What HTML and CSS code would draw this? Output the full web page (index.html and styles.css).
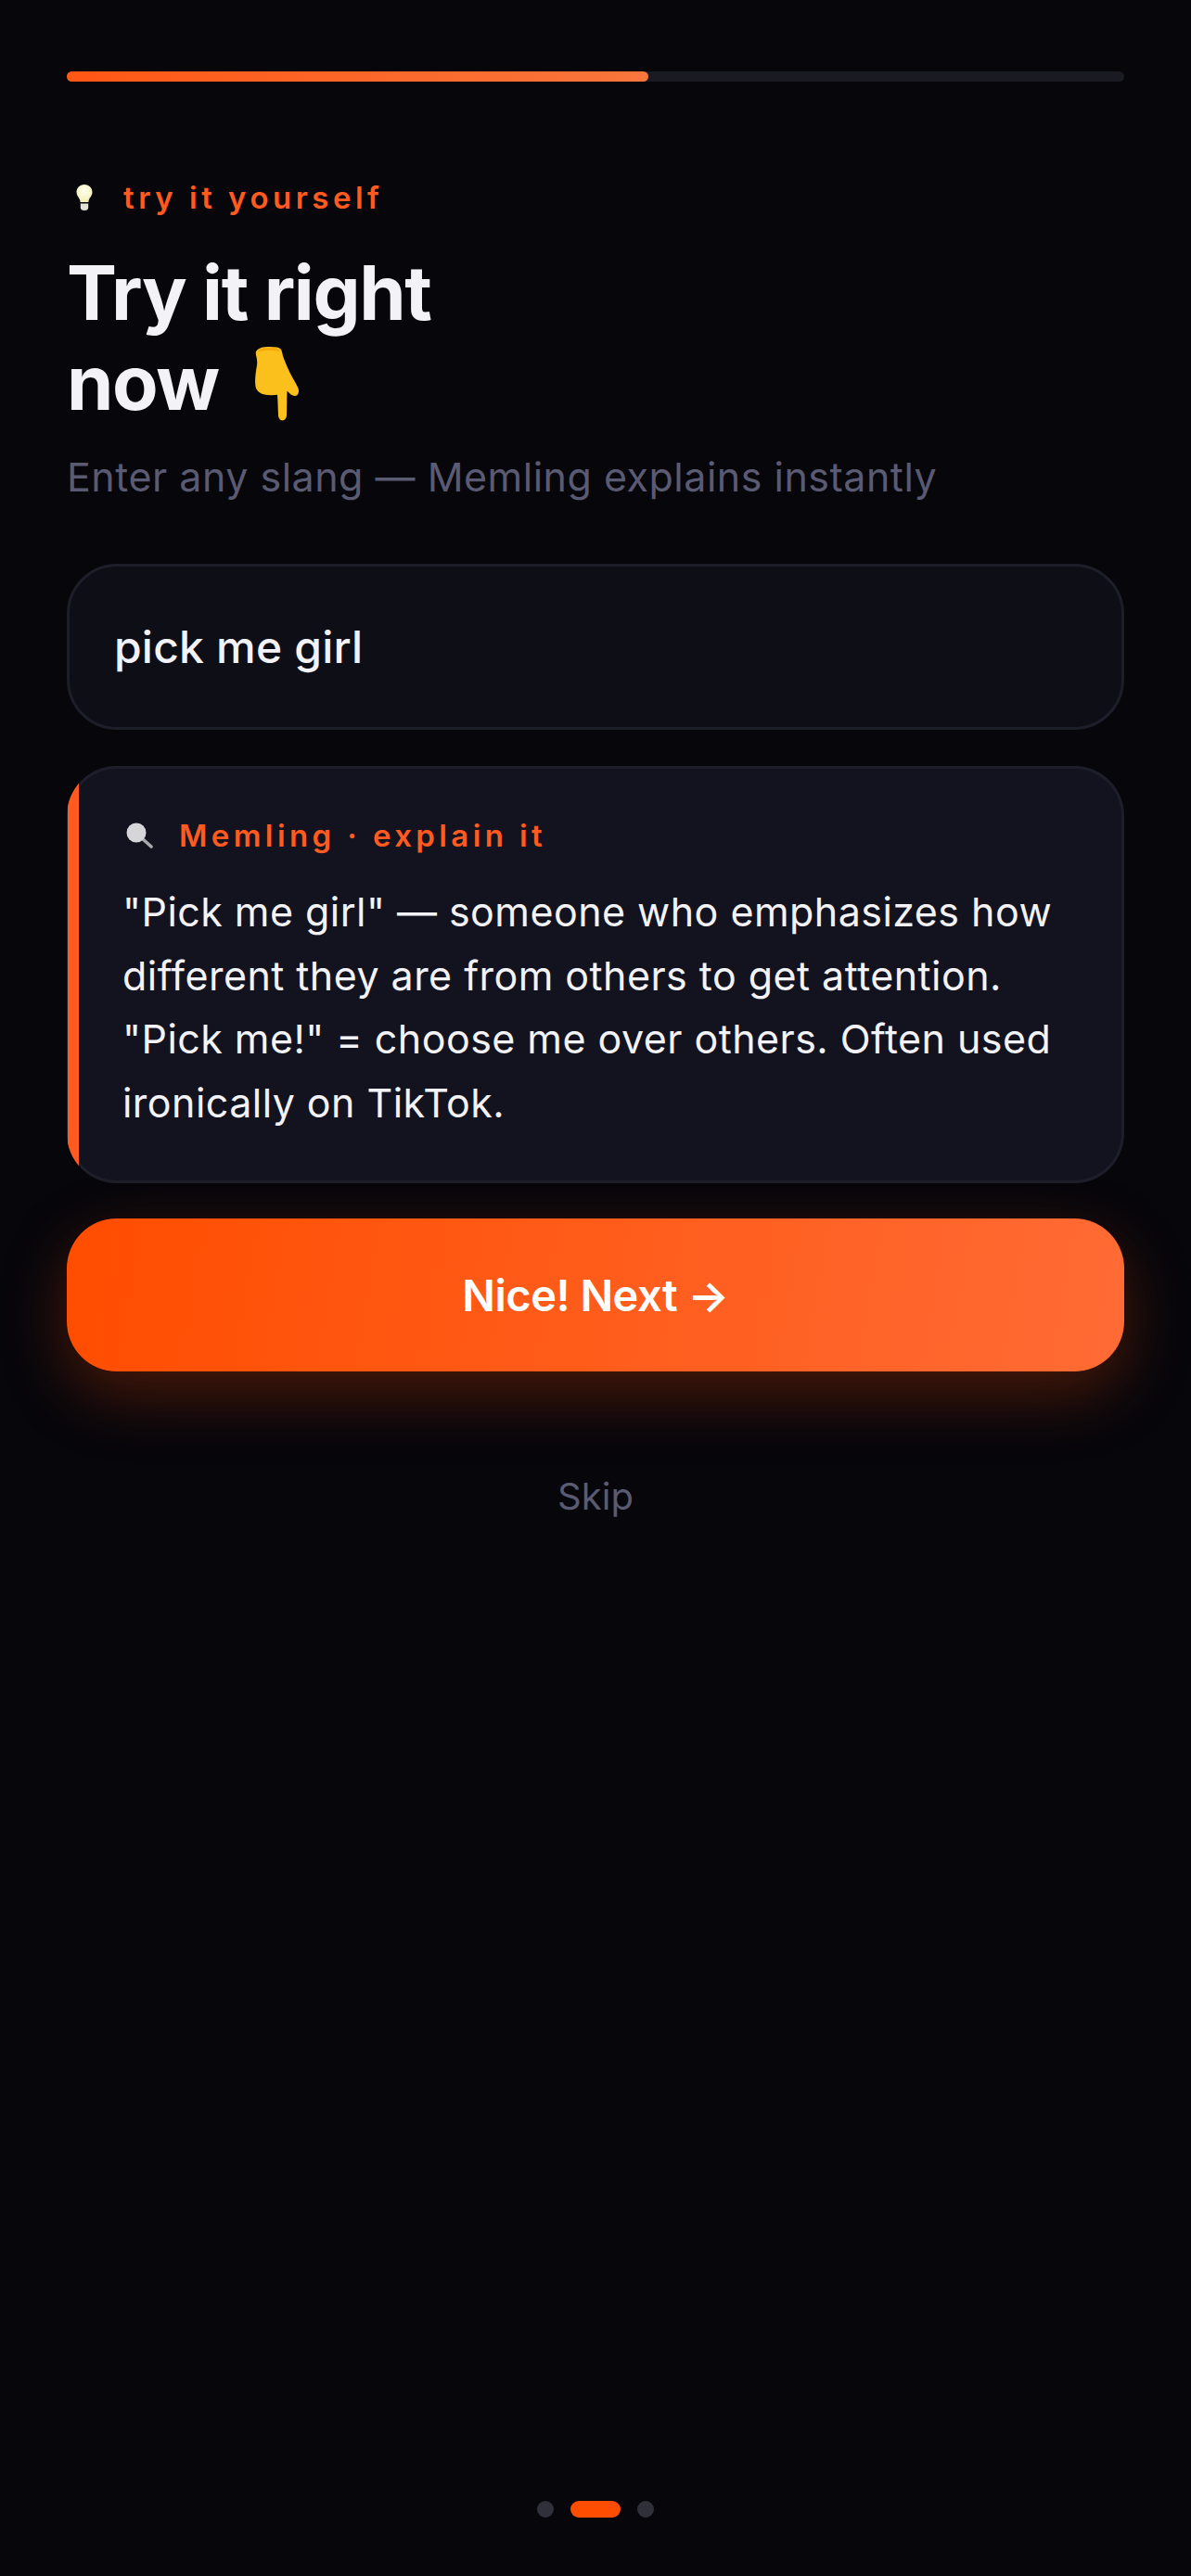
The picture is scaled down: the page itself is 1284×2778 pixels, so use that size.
FILE: index.html
```html
<!DOCTYPE html>
<html lang="en">
<head>
<meta charset="utf-8">
<title>Memling</title>
<link rel="stylesheet" href="styles.css">
</head>
<body>
<main class="screen">
  <div class="progress"><div class="progress-fill"></div></div>
  <div class="eyebrow">
    <svg class="icon-bulb" viewBox="0 0 20 30"><defs><radialGradient id="bulbGlow" cx="50%" cy="35%" r="60%"><stop offset="0" stop-color="#fffff0"/><stop offset="1" stop-color="#f4f0b8"/></radialGradient></defs><path d="M10 1C4.800 1 1.500 4.800 1.500 9.200c0 3.600 2.600 5.600 3.600 8.300.4 1 .5 2 .5 2.500h8.800c0-.5.1-1.500.5-2.500 1-2.700 3.600-4.700 3.600-8.300C18.500 4.800 15.200 1 10 1z" fill="url(#bulbGlow)"/><path d="M5.800 21.500h8.400v4.500c0 1.800-1.600 3-4.200 3s-4.200-1.200-4.200-3z" fill="#e4e2d6"/></svg>
    <span class="eyebrow-text">try it yourself</span>
  </div>
  <h1 class="title">Try it right<br>now <svg class="icon-hand" viewBox="0 0 52 81"><path d="M3 6C5 3 8 1.500 12 1.200 17 .8 22 .8 26 1.500c3 .6 4.500 2.500 5 5 .8 5 3.500 11 6.500 18 2.500 6 7 13 10.500 20 1.500 3 1.500 6.500-.5 8.500-2.500 2-6 .5-8.500-2-.8-.8-1.500-1.500-2.500-2.200-.3 8-.2 17-.5 26-.2 3.200-2 5.700-4.500 5.700s-4.300-2.500-4.500-5.700c-.3-7.500-.5-15-1-22-4 .6-8.500.7-12.500 0C7.500 52 3.500 48.500 2.600 44 1.500 38 2.500 29 4 21c.6-3.500 0-6.500-.5-9C3 10 2.400 8 3 6z" fill="#fbc01c"/><path d="M5 6c2-2.500 4.500-3.500 8-3.700 5-.3 10-.3 13 .5 1.500.5 2.500 1.500 3 3.200-7-1.500-17-1.500-24 0z" fill="#f6ab0a"/></svg></h1>
  <p class="subtitle">Enter any slang — Memling explains instantly</p>
  <div class="input-box">pick me girl</div>
  <section class="answer">
    <div class="answer-label">
      <svg class="icon-search" viewBox="0 0 30 30"><line x1="18" y1="18" x2="28" y2="27" stroke="#a8a8ac" stroke-width="3.600" stroke-linecap="round"/><circle cx="12" cy="12" r="10.500" fill="#d6d6da"/></svg>
      <span class="answer-label-text">Memling · explain it</span>
    </div>
    <p class="answer-text">"Pick me girl" — someone who emphasizes how different they are from others to get attention. "Pick me!" = choose me over others. Often used ironically on TikTok.</p>
  </section>
  <button class="next-button" type="button">Nice! Next →</button>
  <div class="skip">Skip</div>
  <nav class="dots">
    <span class="dot"></span>
    <span class="dot dot-active"></span>
    <span class="dot"></span>
  </nav>
</main>
</body>
</html>
```

FILE: styles.css
```css
* { box-sizing: border-box; }
html, body { margin: 0; padding: 0; background: #06060b; }
body { font-family: Inter, "Liberation Sans", sans-serif; color: #f2f2f7; }
.screen {
  width: 1284px;
  height: 2778px;
  padding: 77px 72px 0;
  display: flex;
  flex-direction: column;
  overflow: hidden;
}
.progress { height: 11px; border-radius: 6px; background: #1a1a22; flex: none; }
.progress-fill {
  width: 55%;
  height: 100%;
  border-radius: 6px;
  background: linear-gradient(90deg, #ff5714, #f9763c);
}
.eyebrow {
  display: flex;
  align-items: center;
  margin-top: 105px;
  height: 40px;
}
.icon-bulb { width: 20px; height: 30px; margin-left: 9px; flex: none; }
.eyebrow-text {
  margin-left: 32px;
  font-size: 33px;
  font-weight: 600;
  letter-spacing: 4.500px;
  color: #ff5a1f;
}
.title {
  margin: 35px 0 0;
  font-size: 81px;
  line-height: 97.200px;
  font-weight: 650;
  letter-spacing: -1.400px;
  color: #f2f2f7;
}
.icon-hand { width: 52px; height: 81px; margin-left: 20px; vertical-align: -12px; }
.subtitle {
  margin: 24px 0 0;
  font-size: 43px;
  line-height: 56px;
  letter-spacing: 0.500px;
  color: #5a5a72;
}
.input-box {
  margin-top: 66px;
  height: 179px;
  flex: none;
  border: 3px solid #1e1e2a;
  border-radius: 54px;
  background: #0e0e16;
  padding: 0 48px;
  display: flex;
  align-items: center;
  font-size: 48px;
  font-weight: 550;
  letter-spacing: 0.200px;
  color: #f2f2f7;
}
.answer {
  position: relative;
  overflow: hidden;
  margin-top: 39px;
  height: 450px;
  flex: none;
  border-radius: 54px;
  background: #13131f;
  box-shadow: inset 0 0 0 3px #1e1e2a;
  padding: 57px 72px 0 60px;
}
.answer::before {
  content: "";
  position: absolute;
  left: 1px;
  top: 0;
  bottom: 0;
  width: 12px;
  background: #ff5a1f;
}
.answer-label { display: flex; align-items: center; height: 36px; }
.icon-search { width: 30px; height: 30px; flex: none; margin-left: 3px; }
.answer-label-text {
  margin-left: 28px;
  font-size: 33px;
  font-weight: 600;
  letter-spacing: 4.400px;
  color: #ff5a1f;
}
.answer-text {
  margin: 30px 0 0;
  font-size: 43px;
  line-height: 68.500px;
  letter-spacing: 0.450px;
  color: #f2f2f7;
}
.next-button {
  margin-top: 38px;
  height: 165px;
  flex: none;
  border: 0;
  border-radius: 54px;
  background: linear-gradient(100deg, #ff4d00, #ff6b35);
  box-shadow: 0 24px 72px rgba(255, 77, 0, 0.28);
  font-family: inherit;
  font-size: 47px;
  font-weight: 600;
  letter-spacing: -0.500px;
  color: #ffffff;
}
.skip {
  margin-top: 110px;
  text-align: center;
  font-size: 40px;
  line-height: 50px;
  color: #5a5a72;
}
.dots {
  margin-top: auto;
  margin-bottom: 63px;
  display: flex;
  justify-content: center;
  align-items: center;
  gap: 18px;
}
.dot { width: 18px; height: 18px; border-radius: 50%; background: #30303a; }
.dot-active { width: 54px; border-radius: 9px; background: #ff4d00; }
```
